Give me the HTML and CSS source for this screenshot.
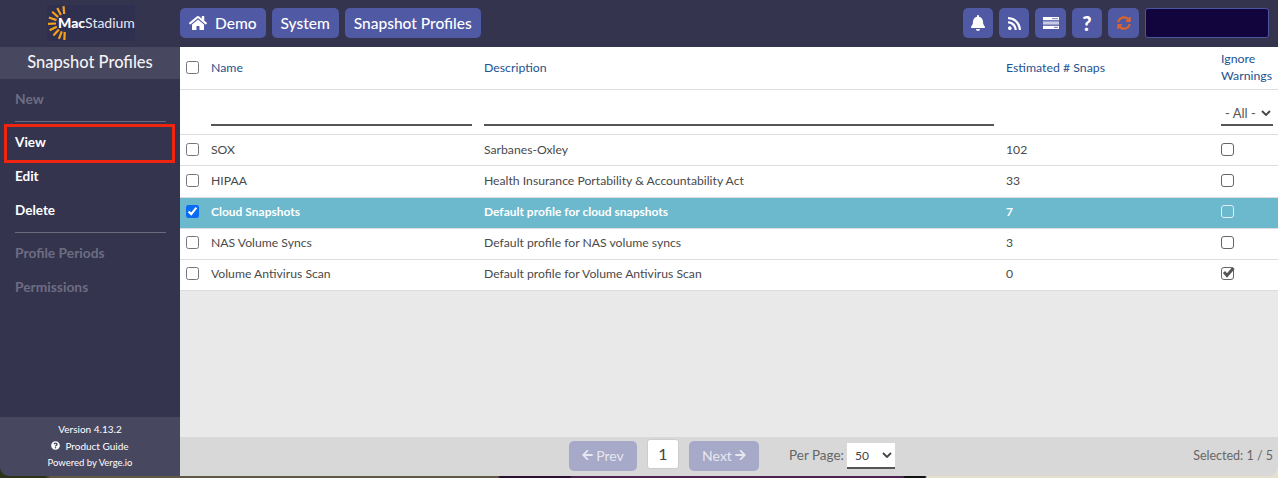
FILE: index.html
```html
<!DOCTYPE html>
<html lang="en">
<head>
    <meta charset="UTF-8">
    <title>Snapshot Profiles</title>
    <link rel="stylesheet" href="styles.css">
</head>
<body>
    <div class="window">
        <header class="topbar">
            <div class="logo-cell">
                <div class="logo">
                    <svg class="sun" viewBox="0 0 36 36" width="36" height="36">
                        <g stroke="#f5a11c" stroke-width="2.2">
                            <path d="M17.2 9L16.5 1.1"/><path d="M13.9 10L10.3 2.9"/><path d="M11.2 12.1L5.2 6.8"/>
                            <path d="M9.5 15.1L1.9 12.5"/><path d="M9 18.5L1 18.9"/><path d="M9.8 21.8L2.6 25.2"/>
                            <path d="M11.9 24.6L6.4 30.4"/><path d="M14.8 26.4L11.9 33.9"/><path d="M17.7 27L17.4 35"/>
                        </g>
                    </svg>
                    <span class="logo-text"><b>Mac</b>Stadium</span>
                </div>
            </div>
            <nav class="crumbs">
                <a class="btn">
                    <svg class="icon-home" viewBox="0 0 576 512"><path d="M280.37 148.26L96 300.11V464a16 16 0 0 0 16 16l112.06-.29a16 16 0 0 0 15.92-16V368a16 16 0 0 1 16-16h64a16 16 0 0 1 16 16v95.64a16 16 0 0 0 16 16.05L464 480a16 16 0 0 0 16-16V300L295.67 148.26a12.19 12.19 0 0 0-15.3 0zM571.6 251.47L488 182.56V44.05a12 12 0 0 0-12-12h-56a12 12 0 0 0-12 12v72.61L318.47 43a48 48 0 0 0-61 0L4.34 251.47a12 12 0 0 0-1.6 16.9l25.5 31A12 12 0 0 0 45.15 301l235.22-193.74a12.19 12.19 0 0 1 15.3 0L530.9 301a12 12 0 0 0 16.9-1.6l25.5-31a12 12 0 0 0-1.7-16.93z"/></svg>
                    Demo
                </a>
                <a class="btn">System</a>
                <a class="btn">Snapshot Profiles</a>
            </nav>
            <div class="tools">
                <a class="tool">
                    <svg viewBox="0 0 448 512" width="14" height="16"><path d="M224 512c35.32 0 63.97-28.65 63.97-64H160.03c0 35.35 28.65 64 63.97 64zm215.39-149.71c-19.32-20.76-55.47-51.99-55.47-154.29 0-77.7-54.48-139.9-127.94-155.16V32c0-17.67-14.32-32-31.98-32s-31.98 14.33-31.98 32v20.84C118.56 68.1 64.08 130.3 64.08 208c0 102.3-36.15 133.53-55.47 154.29-6 6.45-8.66 14.16-8.61 21.71.11 16.4 12.98 32 32.1 32h383.8c19.12 0 32-15.6 32.1-32 .05-7.55-2.61-15.27-8.61-21.71z"/></svg>
                </a>
                <a class="tool">
                    <svg viewBox="0 0 448 512" width="13" height="15"><path d="M128.081 415.959c0 35.369-28.672 64.041-64.041 64.041S0 451.328 0 415.959s28.672-64.041 64.041-64.041 64.04 28.673 64.04 64.041zm175.66 47.25c-8.354-154.6-132.185-278.587-286.95-286.95C7.656 175.765 0 183.105 0 192.253v48.069c0 8.415 6.49 15.472 14.887 16.018 111.832 7.284 201.473 96.702 208.772 208.772.547 8.397 7.604 14.887 16.018 14.887h48.069c9.149.001 16.489-7.655 15.995-16.79zm144.249.288C439.596 229.677 251.465 40.445 16.503 32.01 7.473 31.686 0 38.981 0 48.016v48.068c0 8.625 6.835 15.645 15.453 15.999 191.179 7.839 344.627 161.316 352.465 352.465.353 8.618 7.373 15.453 15.999 15.453h48.068c9.034-.001 16.329-7.474 16.005-16.504z"/></svg>
                </a>
                <a class="tool tool-wide">
                    <svg viewBox="0 0 16 12" width="16" height="12">
                        <rect x="0" y="0" width="16" height="3.2" fill="#fff"/>
                        <rect x="9" y="1" width="6" height="1.2" fill="#8f93c4"/>
                        <rect x="0" y="4.4" width="16" height="3.2" fill="#c9cce6"/>
                        <rect x="0" y="8.8" width="16" height="3.2" fill="#fff"/>
                        <rect x="11" y="9.8" width="4" height="1.2" fill="#8f93c4"/>
                    </svg>
                </a>
                <a class="tool tool-q">?</a>
                <a class="tool tool-wide">
                    <svg class="icon-sync" viewBox="0 0 512 512" width="14" height="14"><path d="M370.72 133.28C339.458 104.008 298.888 87.962 255.848 88c-77.458.068-144.328 53.178-162.791 126.85-1.344 5.363-6.122 9.15-11.651 9.15H24.103c-7.498 0-13.194-6.807-11.807-14.176C33.933 94.924 134.813 8 256 8c66.448 0 126.791 26.136 171.315 68.685L463.03 40.97C478.149 25.851 504 36.559 504 57.941V192c0 13.255-10.745 24-24 24H345.941c-21.382 0-32.09-25.851-16.971-40.971l41.75-41.749zM32 296h134.059c21.382 0 32.09 25.851 16.971 40.971l-41.75 41.75c31.262 29.273 71.835 45.319 114.876 45.28 77.418-.07 144.315-53.144 162.787-126.849 1.344-5.363 6.122-9.15 11.651-9.15h57.304c7.498 0 13.194 6.807 11.807 14.176C478.067 417.076 377.187 504 256 504c-66.448 0-126.791-26.136-171.315-68.685L48.97 471.03C33.851 486.149 8 475.441 8 454.059V320c0-13.255 10.745-24 24-24z"/></svg>
                </a>
                <div class="search-box"></div>
            </div>
        </header>

        <div class="main">
            <aside class="sidebar">
                <h2 class="side-title">Snapshot Profiles</h2>
                <ul class="menu">
                    <li class="off">New</li>
                    <li class="sep"></li>
                    <li class="on">View</li>
                    <li class="on">Edit</li>
                    <li class="on">Delete</li>
                    <li class="sep"></li>
                    <li class="off">Profile Periods</li>
                    <li class="off">Permissions</li>
                </ul>
                <div class="side-foot">
                    <div>Version 4.13.2</div>
                    <div class="guide">
                        <svg viewBox="0 0 512 512" width="9" height="9"><path d="M504 256c0 136.997-111.043 248-248 248S8 392.997 8 256C8 119.083 119.043 8 256 8s248 111.083 248 248zM262.655 90c-54.497 0-89.255 22.957-116.549 63.758-3.536 5.286-2.353 12.415 2.715 16.258l34.699 26.31c5.205 3.947 12.621 3.008 16.665-2.122 17.864-22.658 30.113-35.797 57.303-35.797 20.429 0 45.698 13.148 45.698 32.958 0 14.976-12.363 22.667-32.534 33.976C247.128 238.528 216 254.941 216 296v4c0 6.627 5.373 12 12 12h56c6.627 0 12-5.373 12-12v-1.333c0-28.462 83.186-29.647 83.186-106.667 0-58.002-60.165-102-116.531-102zM256 338c-25.365 0-46 20.635-46 46 0 25.364 20.635 46 46 46s46-20.636 46-46c0-25.365-20.635-46-46-46z"/></svg>
                        Product Guide
                    </div>
                    <div class="powered">Powered by Verge.io</div>
                </div>
            </aside>

            <section class="content">
                <div class="table-area">
                    <table class="grid">
                        <colgroup>
                            <col class="c-check"><col class="c-name"><col class="c-desc"><col class="c-snaps"><col class="c-ignore">
                        </colgroup>
                        <thead>
                            <tr class="head-row">
                                <th><input type="checkbox"></th>
                                <th>Name</th>
                                <th>Description</th>
                                <th>Estimated # Snaps</th>
                                <th>Ignore<br>Warnings</th>
                            </tr>
                            <tr class="filter-row">
                                <td></td>
                                <td><div class="filter filter-name"></div></td>
                                <td><div class="filter filter-desc"></div></td>
                                <td></td>
                                <td>
                                    <div class="filter filter-all">- All -
                                        <svg viewBox="0 0 10 6" width="10" height="6"><path d="M1 1l4 4 4-4" fill="none" stroke="#444" stroke-width="1.8"/></svg>
                                    </div>
                                </td>
                            </tr>
                        </thead>
                        <tbody>
                            <tr>
                                <td><input type="checkbox"></td>
                                <td>SOX</td>
                                <td>Sarbanes-Oxley</td>
                                <td>102</td>
                                <td><span class="box"></span></td>
                            </tr>
                            <tr class="row-tall">
                                <td><input type="checkbox"></td>
                                <td>HIPAA</td>
                                <td>Health Insurance Portability &amp; Accountability Act</td>
                                <td>33</td>
                                <td><span class="box"></span></td>
                            </tr>
                            <tr class="row-low selected">
                                <td><input type="checkbox" checked></td>
                                <td>Cloud Snapshots</td>
                                <td>Default profile for cloud snapshots</td>
                                <td>7</td>
                                <td><span class="box"></span></td>
                            </tr>
                            <tr class="row-low">
                                <td><input type="checkbox"></td>
                                <td>NAS Volume Syncs</td>
                                <td>Default profile for NAS volume syncs</td>
                                <td>3</td>
                                <td><span class="box"></span></td>
                            </tr>
                            <tr class="row-low">
                                <td><input type="checkbox"></td>
                                <td>Volume Antivirus Scan</td>
                                <td>Default profile for Volume Antivirus Scan</td>
                                <td>0</td>
                                <td>
                                    <span class="box box-checked">
                                        <svg viewBox="0 0 14 12" width="14" height="12"><path d="M3 6l3 3.5L12.5 2" fill="none" stroke="#555" stroke-width="3"/></svg>
                                    </span>
                                </td>
                            </tr>
                        </tbody>
                    </table>
                </div>
                <footer class="pager">
                    <div class="pager-mid">
                        <a class="page-btn page-prev">
                            <svg viewBox="0 0 448 512" width="11" height="12"><path d="M257.5 445.1l-22.2 22.2c-9.4 9.4-24.6 9.4-33.9 0L7 273c-9.4-9.4-9.4-24.6 0-33.9L201.4 44.7c9.4-9.4 24.6-9.4 33.9 0l22.2 22.2c9.5 9.5 9.3 25-.4 34.3L136.6 216H424c13.3 0 24 10.7 24 24v32c0 13.3-10.7 24-24 24H136.6l120.5 114.8c9.8 9.3 10 24.8.4 34.3z"/></svg>
                            Prev
                        </a>
                        <div class="page-num">1</div>
                        <a class="page-btn">
                            Next
                            <svg viewBox="0 0 448 512" width="11" height="12"><path d="M190.5 66.9l22.2-22.2c9.4-9.4 24.6-9.4 33.9 0L441 239c9.4 9.4 9.4 24.6 0 33.9L246.6 467.3c-9.4 9.4-24.6 9.4-33.9 0l-22.2-22.2c-9.5-9.5-9.3-25 .4-34.3L311.4 296H24c-13.3 0-24-10.7-24-24v-32c0-13.3 10.7-24 24-24h287.4L190.9 101.2c-9.8-9.3-10-24.8-.4-34.3z"/></svg>
                        </a>
                        <span class="per-label">Per Page:</span>
                        <div class="per-select">50
                            <svg viewBox="0 0 10 6" width="10" height="6"><path d="M1 1l4 4 4-4" fill="none" stroke="#444" stroke-width="1.8"/></svg>
                        </div>
                    </div>
                    <span class="selected-count">Selected: 1 / 5</span>
                </footer>
            </section>
        </div>

        <div class="callout"></div>
    </div>
</body>
</html>
```

FILE: styles.css
```css
html, body {
    margin: 0;
    height: 478px;
    overflow: hidden;
}
body {
    font-family: "Lato", "Noto Sans", sans-serif;
    font-size: 12px;
    background: linear-gradient(to right, #2c3418 0, #2c3418 45px, #5e5844 50px, #5e5844 498px, #2a1030 500px, #2a1030 570px, #4c2450 572px, #4c2450 903px, #111 905px, #111 925px, #e4e0d0 927px, #e4e0d0 100%);
}
.window {
    position: relative;
    height: 476px;
    display: flex;
    flex-direction: column;
    overflow: hidden;
    border-radius: 0 0 9px 9px;
}

/* top bar */
.topbar {
    height: 47px;
    flex: none;
    display: flex;
    align-items: center;
    box-sizing: border-box;
    padding-bottom: 1px;
    background-color: #34344f;
}
.logo-cell {
    width: 180px;
    flex: none;
    padding-left: 47px;
    box-sizing: border-box;
}
.logo {
    width: 88px;
    height: 36px;
    background-color: #2f2f50;
    position: relative;
}
.sun {
    display: block;
}
.logo-text {
    position: absolute;
    left: 11px;
    top: 9px;
    font-size: 14px;
    color: #e8e8f0;
}
.logo-text b {
    color: white;
    font-weight: 900;
}
.crumbs {
    display: flex;
    gap: 6px;
}
.btn {
    height: 30px;
    padding: 0 9px;
    display: flex;
    align-items: center;
    gap: 8px;
    background-color: #5059a3;
    border-radius: 5px;
    color: white;
    font-size: 15.5px;
    font-weight: 500;
}
.icon-home {
    width: 18px;
    height: 16px;
    fill: white;
}
.tools {
    margin-left: auto;
    margin-right: 9px;
    display: flex;
    align-items: center;
    gap: 6px;
}
.tool {
    width: 30px;
    height: 30px;
    display: flex;
    align-items: center;
    justify-content: center;
    background-color: #5059a3;
    border-radius: 5px;
    fill: white;
}
.tool-wide {
    width: 31px;
}
.tool-q {
    color: white;
    font-size: 20px;
    font-weight: 900;
}
.icon-sync {
    fill: #d9642f;
}
.search-box {
    width: 122px;
    height: 28px;
    background-color: #12043c;
    border: 1px solid #4c55a0;
    border-radius: 3px;
}

/* sidebar */
.main {
    flex: 1;
    display: flex;
    min-height: 0;
}
.sidebar {
    width: 180px;
    flex: none;
    display: flex;
    flex-direction: column;
    background-color: #34344f;
}
.side-title {
    margin: 0;
    height: 32px;
    line-height: 30px;
    text-align: center;
    font-size: 16.5px;
    font-weight: 500;
    color: #f2f2f5;
    background-color: #47475f;
}
.menu {
    list-style: none;
    margin: 0;
    padding: 0 14px 0 15px;
    flex: 1;
}
.menu li {
    height: 34px;
    line-height: 34px;
    font-size: 13.5px;
    font-weight: 700;
}
.menu .off {
    color: #6d6d82;
    font-size: 13.8px;
}
.menu .on {
    color: white;
}
.menu li:first-child {
    margin-top: 3px;
}
.menu .sep {
    height: 1px;
    margin: 5px 0 3px;
    background-color: #6a6a7e;
}
.side-foot {
    height: 59px;
    flex: none;
    display: flex;
    flex-direction: column;
    justify-content: center;
    align-items: center;
    gap: 3px;
    box-sizing: border-box;
    padding-bottom: 2px;
    background-color: #47475f;
    color: white;
    font-size: 10px;
    line-height: 14px;
}
.guide {
    display: flex;
    align-items: center;
    gap: 5px;
    fill: white;
}
.powered {
    font-size: 9.5px;
}

/* table */
.content {
    flex: 1;
    min-width: 0;
    display: flex;
    flex-direction: column;
    background-color: #e9e9e9;
}
.table-area {
    flex: 1;
}
.grid {
    width: 100%;
    table-layout: fixed;
    border-collapse: collapse;
    background-color: white;
    color: #4a4a4a;
}
.c-check { width: 31px; }
.c-name { width: 273px; }
.c-desc { width: 522px; }
.c-snaps { width: 215px; }
.grid th {
    height: 40px;
    padding: 0 0 2px;
    text-align: left;
    font-size: 12.3px;
    font-weight: 400;
    line-height: 17px;
    color: #1c5390;
    border-bottom: 1px solid #ddd;
}
.grid td {
    height: 28px;
    padding: 0 0 2px;
    font-size: 12.2px;
    border-bottom: 1px solid #ddd;
}
.grid .row-tall td {
    padding-bottom: 3px;
}
.grid .row-low td {
    height: 26px;
    padding-bottom: 4px;
}
.grid input {
    display: block;
    margin: 0 0 0 6px;
    accent-color: #0a6cf5;
}
.grid .filter-row td {
    height: 44px;
    padding: 0;
    vertical-align: bottom;
}
.filter {
    height: 25px;
    margin-bottom: 8px;
    border-bottom: 2px solid #555;
    box-sizing: border-box;
}
.filter-name { width: 261px; }
.filter-desc { width: 510px; }
.filter-all {
    width: 52px;
    display: flex;
    align-items: center;
    justify-content: space-between;
    font-size: 13px;
    color: #555;
    padding: 0 2px 0 4px;
}
.box {
    display: block;
    width: 11px;
    height: 11px;
    border: 1px solid #666;
    border-radius: 3px;
    position: relative;
}
.box svg {
    position: absolute;
    left: -1px;
    top: -2px;
}
.grid .selected td {
    background-color: #6cb8cd;
    color: white;
    font-size: 12px;
    font-weight: 700;
}
.selected .box {
    border-color: #dff1f5;
}

/* bottom bar */
.pager {
    height: 39px;
    flex: none;
    position: relative;
    display: flex;
    align-items: center;
    justify-content: flex-end;
    box-sizing: border-box;
    padding: 0 5px 3px 0;
    background-color: #d8d8d8;
    color: #666;
}
.pager-mid {
    position: absolute;
    left: 389px;
    top: 4px;
    display: flex;
    align-items: center;
}
.page-btn {
    width: 70px;
    height: 30px;
    display: flex;
    align-items: center;
    justify-content: center;
    gap: 3px;
    box-sizing: border-box;
    padding-bottom: 2px;
    background-color: #a6a9c8;
    border-radius: 5px;
    color: #e6e7f0;
    fill: #e6e7f0;
    font-size: 14px;
}
.page-prev {
    width: 68px;
}
.page-num {
    width: 30px;
    height: 28px;
    margin: -4px 10px 0;
    line-height: 28px;
    text-align: center;
    background-color: white;
    border: 1px solid #ccc;
    border-radius: 3px;
    color: #444;
    font-size: 16px;
}
.per-label {
    margin-left: 30px;
    font-size: 13.5px;
    position: relative;
    top: -1px;
}
.per-select {
    width: 48px;
    height: 26px;
    margin-left: 3px;
    padding: 0 3px 0 8px;
    display: flex;
    align-items: center;
    justify-content: space-between;
    box-sizing: border-box;
    background-color: white;
    border-bottom: 2px solid #555;
    color: #444;
    font-size: 12px;
}
.selected-count {
    font-size: 12.5px;
}

/* red annotation round the View item */
.callout {
    position: absolute;
    left: 4px;
    top: 124px;
    width: 165px;
    height: 33px;
    border: 3px solid #f0250f;
}
```
